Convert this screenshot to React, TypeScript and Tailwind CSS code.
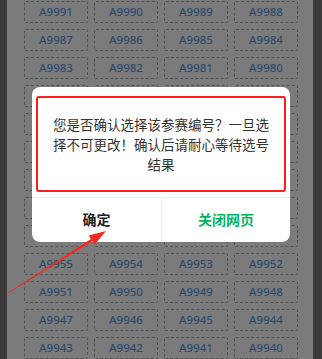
import React from 'react';

const rows = Array.from({ length: 13 }, (_, r) =>
  Array.from({ length: 4 }, (_, c) => `A${9991 - r * 4 - c}`)
);

const Arrow = () => (
  <svg className="absolute left-0 top-0 pointer-events-none" width="322" height="359" viewBox="0 0 322 359">
    <polygon
      fill="#f42a1e"
      points="8.2,293.3 92.4,241.3 94.5,244.7 106,231 88.7,235.5 90.9,238.9 7.8,292.7"
    />
  </svg>
);

export default function App() {
  return (
    <div
      className="relative w-[322px] h-[359px] overflow-hidden bg-[#3b3b3b]"
      style={{ fontFamily: '"Noto Sans", "Noto Sans CJK SC", sans-serif' }}
    >
      <div className="ml-[7px] w-[306px] h-full bg-[#7b7b7b] pl-[17px] pt-[1px]">
        <div className="grid grid-cols-[repeat(4,64px)] gap-[6px]">
          {rows.flat().map((code) => (
            <div
              key={code}
              className="h-[22px] flex items-center justify-center border border-dashed border-[#555] rounded-[2px] text-[11.5px] font-medium text-[#2f4b6d]"
            >
              {code}
            </div>
          ))}
        </div>
      </div>

      {/* confirm dialog */}
      <div className="absolute left-[32px] top-[87px] w-[258px] h-[155px] bg-white rounded-[8px] flex flex-col">
        <div className="mx-[4px] mt-[9px] h-[96px] border-2 border-[#fb1e1e] rounded-[3px] flex items-center justify-center">
          <p className="text-[13.5px] leading-[20px] text-[#333] text-center" style={{ fontFamily: '"Noto Sans CJK SC", sans-serif' }}>
            <span className="block">您是否确认选择该参赛编号？一旦选</span>
            <span className="block">择不可更改！确认后请耐心等待选号</span>
            <span className="block">结果</span>
          </p>
        </div>
        <div className="mt-[5px] flex-1 flex border-t border-[#ececec]" style={{ fontFamily: '"Noto Sans CJK SC", sans-serif' }}>
          <button className="w-[129px] flex items-center justify-center text-[14px] font-semibold text-[#222] pb-[2px]">
            确定
          </button>
          <button className="flex-1 flex items-center justify-center border-l border-[#ececec] text-[14px] font-semibold text-[#07b45d] pb-[2px]">
            关闭网页
          </button>
        </div>
      </div>

      <Arrow />
    </div>
  );
}
